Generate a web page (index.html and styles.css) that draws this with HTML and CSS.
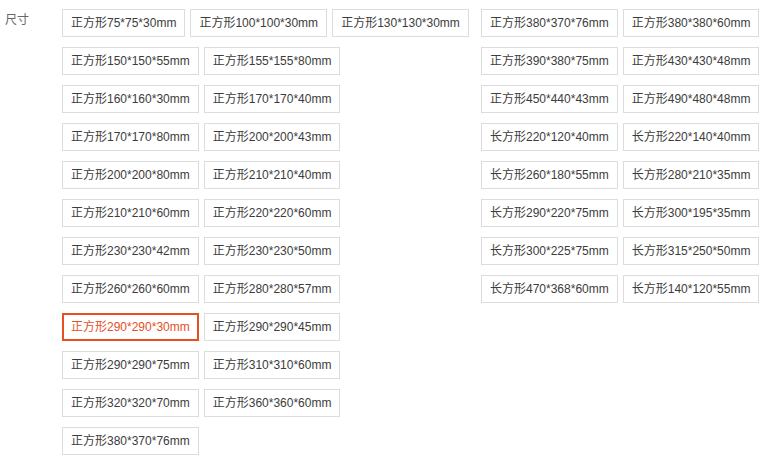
FILE: index.html
```html
<!DOCTYPE html>
<html lang="zh-CN">
<head>
<meta charset="utf-8">
<title>尺寸</title>
<link rel="stylesheet" href="styles.css">
</head>
<body>
<div class="sku">
  <div class="sku-label">尺寸</div>
  <div class="sku-cols">
    <div class="sku-col sku-col-left">
      <div class="sku-row"><span class="opt">正方形75*75*30mm</span><span class="opt">正方形100*100*30mm</span><span class="opt">正方形130*130*30mm</span></div>
      <div class="sku-row"><span class="opt">正方形150*150*55mm</span><span class="opt">正方形155*155*80mm</span></div>
      <div class="sku-row"><span class="opt">正方形160*160*30mm</span><span class="opt">正方形170*170*40mm</span></div>
      <div class="sku-row"><span class="opt">正方形170*170*80mm</span><span class="opt">正方形200*200*43mm</span></div>
      <div class="sku-row"><span class="opt">正方形200*200*80mm</span><span class="opt">正方形210*210*40mm</span></div>
      <div class="sku-row"><span class="opt">正方形210*210*60mm</span><span class="opt">正方形220*220*60mm</span></div>
      <div class="sku-row"><span class="opt">正方形230*230*42mm</span><span class="opt">正方形230*230*50mm</span></div>
      <div class="sku-row"><span class="opt">正方形260*260*60mm</span><span class="opt">正方形280*280*57mm</span></div>
      <div class="sku-row"><span class="opt selected">正方形290*290*30mm</span><span class="opt">正方形290*290*45mm</span></div>
      <div class="sku-row"><span class="opt">正方形290*290*75mm</span><span class="opt">正方形310*310*60mm</span></div>
      <div class="sku-row"><span class="opt">正方形320*320*70mm</span><span class="opt">正方形360*360*60mm</span></div>
      <div class="sku-row"><span class="opt">正方形380*370*76mm</span></div>
    </div>
    <div class="sku-col sku-col-right">
      <div class="sku-row"><span class="opt">正方形380*370*76mm</span><span class="opt">正方形380*380*60mm</span></div>
      <div class="sku-row"><span class="opt">正方形390*380*75mm</span><span class="opt">正方形430*430*48mm</span></div>
      <div class="sku-row"><span class="opt">正方形450*440*43mm</span><span class="opt">正方形490*480*48mm</span></div>
      <div class="sku-row"><span class="opt">长方形220*120*40mm</span><span class="opt">长方形220*140*40mm</span></div>
      <div class="sku-row"><span class="opt">长方形260*180*55mm</span><span class="opt">长方形280*210*35mm</span></div>
      <div class="sku-row"><span class="opt">长方形290*220*75mm</span><span class="opt">长方形300*195*35mm</span></div>
      <div class="sku-row"><span class="opt">长方形300*225*75mm</span><span class="opt">长方形315*250*50mm</span></div>
      <div class="sku-row"><span class="opt">长方形470*368*60mm</span><span class="opt">长方形140*120*55mm</span></div>
    </div>
  </div>
</div>
</body>
</html>
```
FILE: styles.css
```css
html, body {
  margin: 0;
  padding: 0;
  background: #fff;
}
body {
  font-family: "Liberation Sans", "Noto Sans CJK SC", sans-serif;
  font-size: 12px;
  color: #3c3c3c;
}
.sku {
  display: flex;
  padding: 9px 0 0 5px;
}
.sku-label {
  width: 57px;
  color: #666;
  line-height: 22px;
}
.sku-cols {
  display: flex;
}
.sku-col-left {
  width: 419px;
}
.sku-col {
  display: flex;
  flex-direction: column;
  gap: 10px;
}
.sku-row {
  display: flex;
  gap: 5px;
}
.opt {
  display: block;
  height: 26px;
  line-height: 26px;
  padding: 0 8px;
  border: 1px solid #dcdcdc;
  white-space: nowrap;
}
.opt.selected {
  border: 2px solid #e4501e;
  padding: 0 7px;
  line-height: 24px;
  height: 24px;
  color: #e4501e;
}
```
